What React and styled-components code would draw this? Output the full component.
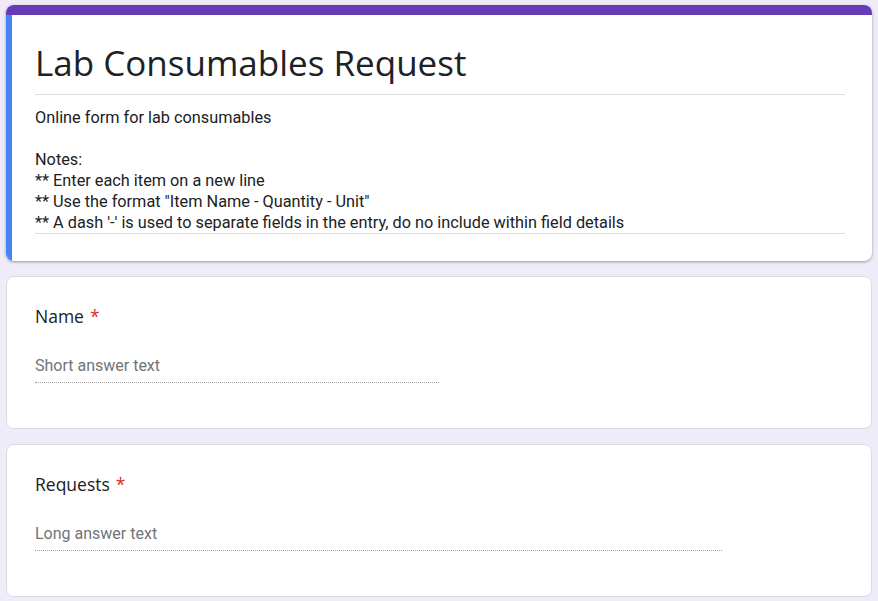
import React from "react"
import styled, { createGlobalStyle } from "styled-components"

const GlobalStyle = createGlobalStyle`
  html, body {
    margin: 0;
    padding: 0;
    background: #f0ebf8;
  }
  body {
    font-family: Roboto, "Liberation Sans", Arial, sans-serif;
    color: #202124;
  }
`

const Page = styled.div`
  display: flex;
  flex-direction: column;
  gap: 15px;
  padding: 5px 6px 20px;
`

const Card = styled.div`
  background: #fff;
  border: 1px solid #dadce0;
  border-radius: 8px;
  overflow: hidden;
`

const HeaderCard = styled(Card)`
  border: none;
  box-shadow: 0 1px 2px rgba(60, 64, 67, 0.3), 0 1px 3px 1px rgba(60, 64, 67, 0.15);
`

const TopStripe = styled.div`
  height: 10px;
  background: #673ab7;
`

const HeaderBody = styled.div`
  border-left: 6px solid #4285f4;
  padding: 28px 27px 27px 23px;
`

const Title = styled.h1`
  margin: 0;
  font-family: "Open Sans", Roboto, sans-serif;
  font-weight: 400;
  font-size: 35px;
  line-height: 40px;
  padding-bottom: 11px;
  border-bottom: 1px solid #dadce0;
  color: #202124;
`

const Description = styled.div`
  margin-top: 12px;
  font-size: 16.3px;
  line-height: 21px;
  white-space: pre-wrap;
  border-bottom: 1px solid #dadce0;
`

const QuestionCard = styled(Card)`
  padding: 27px 28px 45px 28px;
`

const Label = styled.div`
  font-family: "Open Sans", Roboto, sans-serif;
  font-size: 17.5px;
  line-height: 24px;
  color: #202124;
`

const Required = styled.span`
  color: #d93025;
  margin-left: 6px;
`

const Answer = styled.div`
  margin-top: 28px;
  width: ${p => p.$width};
  font-size: 16px;
  line-height: 20px;
  color: #70757a;
  padding-bottom: 6px;
  border-bottom: 1px dotted rgba(0, 0, 0, 0.38);
`

const description = `Online form for lab consumables

Notes:
** Enter each item on a new line
** Use the format "Item Name - Quantity - Unit"
** A dash '-' is used to separate fields in the entry, do no include within field details`

const questions = [
  { label: "Name", placeholder: "Short answer text", width: "50%" },
  { label: "Requests", placeholder: "Long answer text", width: "85%" },
]

export default function App() {
  return (
    <>
      <GlobalStyle />
      <Page>
        <HeaderCard>
          <TopStripe />
          <HeaderBody>
            <Title>Lab Consumables Request</Title>
            <Description>{description}</Description>
          </HeaderBody>
        </HeaderCard>
        {questions.map(q => (
          <QuestionCard key={q.label}>
            <Label>
              {q.label}
              <Required>*</Required>
            </Label>
            <Answer $width={q.width}>{q.placeholder}</Answer>
          </QuestionCard>
        ))}
      </Page>
    </>
  )
}
